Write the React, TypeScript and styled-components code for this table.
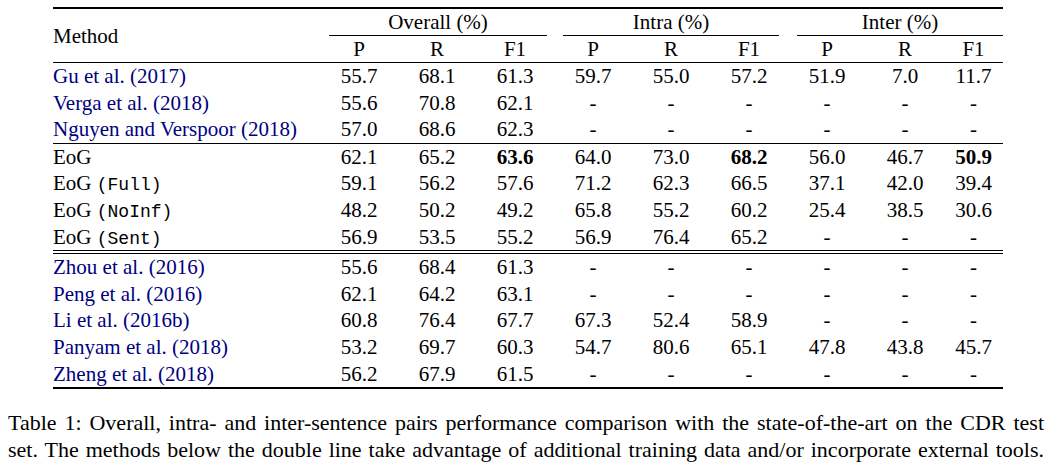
import styled, { createGlobalStyle } from "styled-components"

type Row = {
  method: string
  cite?: boolean
  variant?: string
  cells: string[]
  bold?: number[]
  rule?: "single" | "double"
}

const rows: Row[] = [
  { method: "Gu et al. (2017)", cite: true, cells: ["55.7", "68.1", "61.3", "59.7", "55.0", "57.2", "51.9", "7.0", "11.7"] },
  { method: "Verga et al. (2018)", cite: true, cells: ["55.6", "70.8", "62.1", "-", "-", "-", "-", "-", "-"] },
  { method: "Nguyen and Verspoor (2018)", cite: true, cells: ["57.0", "68.6", "62.3", "-", "-", "-", "-", "-", "-"] },
  { method: "EoG", cells: ["62.1", "65.2", "63.6", "64.0", "73.0", "68.2", "56.0", "46.7", "50.9"], bold: [2, 5, 8], rule: "single" },
  { method: "EoG", variant: "(Full)", cells: ["59.1", "56.2", "57.6", "71.2", "62.3", "66.5", "37.1", "42.0", "39.4"] },
  { method: "EoG", variant: "(NoInf)", cells: ["48.2", "50.2", "49.2", "65.8", "55.2", "60.2", "25.4", "38.5", "30.6"] },
  { method: "EoG", variant: "(Sent)", cells: ["56.9", "53.5", "55.2", "56.9", "76.4", "65.2", "-", "-", "-"] },
  { method: "Zhou et al. (2016)", cite: true, cells: ["55.6", "68.4", "61.3", "-", "-", "-", "-", "-", "-"], rule: "double" },
  { method: "Peng et al. (2016)", cite: true, cells: ["62.1", "64.2", "63.1", "-", "-", "-", "-", "-", "-"] },
  { method: "Li et al. (2016b)", cite: true, cells: ["60.8", "76.4", "67.7", "67.3", "52.4", "58.9", "-", "-", "-"] },
  { method: "Panyam et al. (2018)", cite: true, cells: ["53.2", "69.7", "60.3", "54.7", "80.6", "65.1", "47.8", "43.8", "45.7"] },
  { method: "Zheng et al. (2018)", cite: true, cells: ["56.2", "67.9", "61.5", "-", "-", "-", "-", "-", "-"] },
]

const groups = [
  { label: "Overall (%)", l: 9, r: 7 },
  { label: "Intra (%)", l: 9, r: 9 },
  { label: "Inter (%)", l: 9, r: 0 },
]

export default function App() {
  return (
    <Page>
      <GlobalStyle />
      <Table>
        <colgroup>
          <col style={{ width: 267 }} />
          {[0, 1, 2, 3, 4, 5, 6, 7].map((i) => (
            <col key={i} style={{ width: 78 }} />
          ))}
          <col style={{ width: 59 }} />
        </colgroup>
        <thead>
          <tr>
            <MethodHead rowSpan={2}>Method</MethodHead>
            {groups.map((g) => (
              <GroupHead key={g.label} colSpan={3}>
                <GroupLabel $l={g.l} $r={g.r}>{g.label}</GroupLabel>
              </GroupHead>
            ))}
          </tr>
          <tr>
            {groups.map((g) =>
              ["P", "R", "F1"].map((m) => <SubHead key={g.label + m}>{m}</SubHead>)
            )}
          </tr>
        </thead>
        <tbody>
          {rows.map((row, idx) => (
            <BodyRow key={idx} $rule={row.rule}>
              <MethodCell $cite={row.cite}>
                {row.method}
                {row.variant && (
                  <>
                    {" "}
                    <Mono>{row.variant}</Mono>
                  </>
                )}
              </MethodCell>
              {row.cells.map((c, i) => (
                <NumCell key={i} $bold={row.bold?.includes(i)}>
                  {c}
                </NumCell>
              ))}
            </BodyRow>
          ))}
        </tbody>
      </Table>
      <Caption>
        Table 1: Overall, intra- and inter-sentence pairs performance comparison with the state-of-the-art on the CDR test
        <br />
        set. The methods below the double line take advantage of additional training data and/or incorporate external tools.
      </Caption>
    </Page>
  )
}

const GlobalStyle = createGlobalStyle`
  body {
    margin: 0;
    background: #ffffff;
    color: #000000;
    font-family: "Liberation Serif", "Times New Roman", serif;
  }
`

const Page = styled.div`
  padding: 7px 8px 0 8px;
  width: 1036px;
`

const Table = styled.table`
  margin-left: 45px;
  width: 950px;
  table-layout: fixed;
  border-collapse: separate;
  border-spacing: 0;
  border-top: 2px solid #000;
  border-bottom: 2px solid #000;
  font-size: 21px;

  th,
  td {
    padding: 0;
    font-weight: normal;
    white-space: nowrap;
  }
`

const MethodHead = styled.th`
  text-align: left;
  vertical-align: middle;
  line-height: 26px;
  border-bottom: 1px solid #000;
`

const GroupHead = styled.th`
  line-height: 26px;
  vertical-align: top;
`

const GroupLabel = styled.div<{ $l: number; $r: number }>`
  margin-left: ${(p) => p.$l}px;
  margin-right: ${(p) => p.$r}px;
  border-bottom: 1px solid #000;
  text-align: center;
`

const SubHead = styled.th`
  text-align: center;
  line-height: 26px;
  border-bottom: 1px solid #000;
`

const BodyRow = styled.tr<{ $rule?: "single" | "double" }>`
  td {
    height: 26.6px;
    border-top: ${(p) =>
      p.$rule === "double" ? "4px double #000" : p.$rule === "single" ? "1px solid #000" : "none"};
  }
`

const MethodCell = styled.td<{ $cite?: boolean }>`
  text-align: left;
  line-height: 26.6px;
  color: ${(p) => (p.$cite ? "#000080" : "#000")};
`

const Mono = styled.span`
  font-family: "Liberation Mono", "Courier New", monospace;
  font-size: 18px;
  line-height: 0;
`

const NumCell = styled.td<{ $bold?: boolean }>`
  text-align: center;
  line-height: 26.6px;
  font-weight: ${(p) => (p.$bold ? "bold" : "normal")} !important;
`

const Caption = styled.p`
  margin: 20px 0 0 0;
  font-size: 22px;
  line-height: 27px;
  text-align: justify;
  text-align-last: justify;
`
